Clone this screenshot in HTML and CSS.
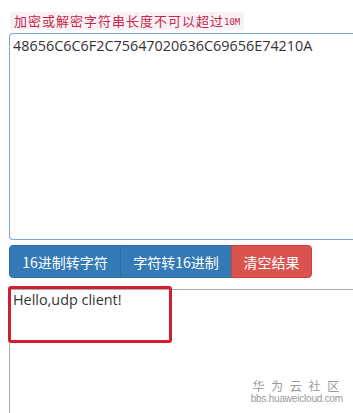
FILE: index.html
```html
<!DOCTYPE html>
<html lang="zh">
<head>
<meta charset="utf-8">
<link rel="stylesheet" href="styles.css">
</head>
<body>
<div class="page">
  <div class="hint"><span class="hint-cn">加密或解密字符串长度不可以超过</span><span class="hint-mono">10M</span></div>
  <textarea class="box box-input">48656C6C6F2C75647020636C69656E74210A</textarea>
  <div class="btn-group">
    <button class="btn btn-blue btn-first">16进制转字符</button>
    <button class="btn btn-blue">字符转16进制</button>
    <button class="btn btn-red btn-last">清空结果</button>
  </div>
  <div class="result-wrap">
    <textarea class="box box-output">Hello,udp client!</textarea>
    <div class="highlight"></div>
  </div>
  <div class="watermark">
    <div class="wm-cn">华 为 云 社 区</div>
    <div class="wm-url">bbs.huaweicloud.com</div>
  </div>
</div>
</body>
</html>
```

FILE: styles.css
```css
html, body {
  margin: 0;
  padding: 0;
  background: #fff;
  overflow: hidden;
}
.page {
  position: relative;
  width: 353px;
  height: 413px;
  padding: 12px 0 0 9px;
  box-sizing: border-box;
  overflow: hidden;
  font-family: "Open Sans", "Noto Sans CJK SC", sans-serif;
}
.hint {
  display: flex;
  width: max-content;
  align-items: center;
  margin-left: 1px;
  padding: 0 4px;
  background: #f9f2f4;
  color: #c7254e;
  border-radius: 2px;
  height: 18px;
  box-sizing: border-box;
}
.hint-cn {
  font-family: "Noto Sans CJK SC", sans-serif;
  font-size: 13px;
  letter-spacing: 1px;
  line-height: 18px;
}
.hint-mono {
  font-family: "DejaVu Sans Mono", monospace;
  font-size: 9px;
  line-height: 18px;
  padding-top: 2px;
}
.box {
  display: block;
  resize: none;
  overflow: hidden;
  width: 344px;
  box-sizing: border-box;
  font-family: "Open Sans", "Noto Sans", sans-serif;
  font-size: 14.4px;
  color: #333;
  padding: 0 3px;
  margin: 0;
  line-height: 20px;
  background: #fff;
}
.box-input {
  margin-top: 3px;
  height: 207px;
  border: 1px solid #7ea6da;
  border-right: none;
  border-radius: 4px 0 0 4px;
  padding-top: 2px;
}
.btn-group {
  display: flex;
  margin-top: 5px;
}
.btn {
  height: 33px;
  border: 1px solid #2e6da4;
  margin: 0;
  padding: 0;
  white-space: nowrap;
  font-family: "Noto Sans CJK SC", sans-serif;
  font-size: 14px;
  color: #fff;
  cursor: pointer;
}
.btn-blue {
  background: #337ab7;
  width: 112px;
  margin-left: -1px;
}
.btn-first {
  margin-left: 0;
  border-radius: 4px 0 0 4px;
}
.btn-red {
  background: #d9534f;
  border-color: #d43f3a;
  width: 81px;
  margin-left: -1px;
}
.btn-last {
  border-radius: 0 4px 4px 0;
}
.result-wrap {
  position: relative;
  margin-top: 11px;
}
.box-output {
  height: 130px;
  border: 1px solid #a9a9a9;
  border-right: none;
  border-bottom: none;
  border-radius: 0;
  padding: 0 3px;
  font-size: 14.4px;
}
.highlight {
  position: absolute;
  left: -1px;
  top: -3px;
  width: 164px;
  height: 57px;
  box-sizing: border-box;
  border: 3px solid #d0202e;
  border-radius: 3px;
}
.watermark {
  position: absolute;
  right: 10px;
  top: 378px;
  text-align: center;
  color: #9a9a9a;
}
.wm-cn {
  font-family: "Noto Sans CJK SC", sans-serif;
  font-size: 12px;
  line-height: 15px;
  letter-spacing: 2px;
}
.wm-url {
  font-family: "Liberation Sans", sans-serif;
  font-size: 10px;
  line-height: 11px;
  letter-spacing: -0.2px;
}
```
